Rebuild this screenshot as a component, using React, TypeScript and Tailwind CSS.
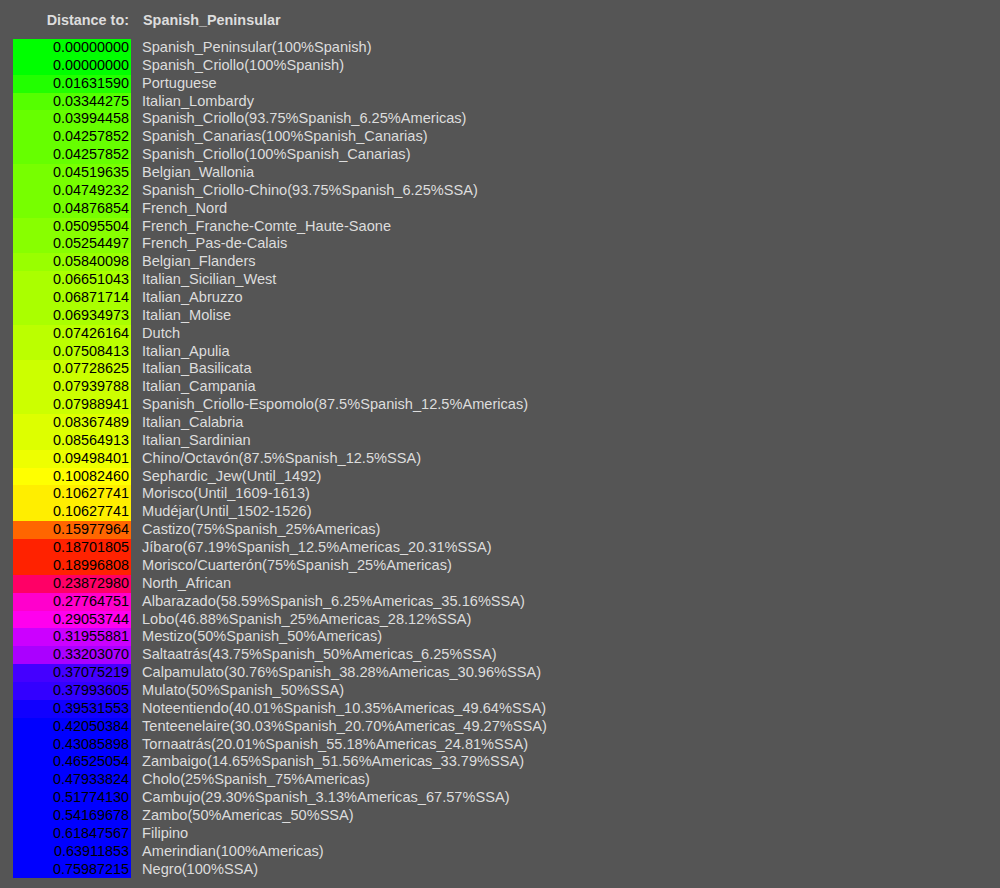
const rows: [number, string][] = [
  [0.0, "Spanish_Peninsular(100%Spanish)"],
  [0.0, "Spanish_Criollo(100%Spanish)"],
  [0.0163159, "Portuguese"],
  [0.03344275, "Italian_Lombardy"],
  [0.03994458, "Spanish_Criollo(93.75%Spanish_6.25%Americas)"],
  [0.04257852, "Spanish_Canarias(100%Spanish_Canarias)"],
  [0.04257852, "Spanish_Criollo(100%Spanish_Canarias)"],
  [0.04519635, "Belgian_Wallonia"],
  [0.04749232, "Spanish_Criollo-Chino(93.75%Spanish_6.25%SSA)"],
  [0.04876854, "French_Nord"],
  [0.05095504, "French_Franche-Comte_Haute-Saone"],
  [0.05254497, "French_Pas-de-Calais"],
  [0.05840098, "Belgian_Flanders"],
  [0.06651043, "Italian_Sicilian_West"],
  [0.06871714, "Italian_Abruzzo"],
  [0.06934973, "Italian_Molise"],
  [0.07426164, "Dutch"],
  [0.07508413, "Italian_Apulia"],
  [0.07728625, "Italian_Basilicata"],
  [0.07939788, "Italian_Campania"],
  [0.07988941, "Spanish_Criollo-Espomolo(87.5%Spanish_12.5%Americas)"],
  [0.08367489, "Italian_Calabria"],
  [0.08564913, "Italian_Sardinian"],
  [0.09498401, "Chino/Octavón(87.5%Spanish_12.5%SSA)"],
  [0.1008246, "Sephardic_Jew(Until_1492)"],
  [0.10627741, "Morisco(Until_1609-1613)"],
  [0.10627741, "Mudéjar(Until_1502-1526)"],
  [0.15977964, "Castizo(75%Spanish_25%Americas)"],
  [0.18701805, "Jíbaro(67.19%Spanish_12.5%Americas_20.31%SSA)"],
  [0.18996808, "Morisco/Cuarterón(75%Spanish_25%Americas)"],
  [0.2387298, "North_African"],
  [0.27764751, "Albarazado(58.59%Spanish_6.25%Americas_35.16%SSA)"],
  [0.29053744, "Lobo(46.88%Spanish_25%Americas_28.12%SSA)"],
  [0.31955881, "Mestizo(50%Spanish_50%Americas)"],
  [0.3320307, "Saltaatrás(43.75%Spanish_50%Americas_6.25%SSA)"],
  [0.37075219, "Calpamulato(30.76%Spanish_38.28%Americas_30.96%SSA)"],
  [0.37993605, "Mulato(50%Spanish_50%SSA)"],
  [0.39531553, "Noteentiendo(40.01%Spanish_10.35%Americas_49.64%SSA)"],
  [0.42050384, "Tenteenelaire(30.03%Spanish_20.70%Americas_49.27%SSA)"],
  [0.43085898, "Tornaatrás(20.01%Spanish_55.18%Americas_24.81%SSA)"],
  [0.46525054, "Zambaigo(14.65%Spanish_51.56%Americas_33.79%SSA)"],
  [0.47933824, "Cholo(25%Spanish_75%Americas)"],
  [0.5177413, "Cambujo(29.30%Spanish_3.13%Americas_67.57%SSA)"],
  [0.54169678, "Zambo(50%Americas_50%SSA)"],
  [0.61847567, "Filipino"],
  [0.63911853, "Amerindian(100%Americas)"],
  [0.75987215, "Negro(100%SSA)"],
];

// green -> yellow -> red -> magenta -> blue, stepped like a 3-digit hex
function cellColor(v: number) {
  const h = Math.max(120 - 600 * v, -120);
  let r = 0, g = 0, b = 0;
  if (h >= 60) { r = ((120 - h) / 60) * 255; g = 255; }
  else if (h >= 0) { r = 255; g = (h / 60) * 255; }
  else if (h >= -60) { r = 255; b = (-h / 60) * 255; }
  else { r = ((120 + h) / 60) * 255; b = 255; }
  const q = (x: number) => Math.round(x / 17) * 17;
  return `rgb(${q(r)}, ${q(g)}, ${q(b)})`;
}

export default function App() {
  return (
    <div
      className="min-h-screen bg-[#555555] pl-[13px] pt-[11px] text-[14.4px] text-[#dddddd]"
      style={{ fontFamily: '"Liberation Sans", Arial, sans-serif' }}
    >
      {/* Header */}
      <div className="flex h-[18px] leading-[18px] font-bold">
        <div className="w-[118px] pr-[2px] text-right">Distance to:</div>
        <div className="pl-[12px]">Spanish_Peninsular</div>
      </div>

      <div className="mt-[10px] flex flex-col">
        {rows.map(([v, name], i) => (
          <div key={i} className="flex h-[17.87px] leading-[17.87px]">
            <div
              className="w-[118px] shrink-0 pr-[2px] text-right text-black"
              style={{ backgroundColor: cellColor(v) }}
            >
              {v.toFixed(8)}
            </div>
            <div className="whitespace-nowrap pl-[11px] text-[14.6px]">{name}</div>
          </div>
        ))}
      </div>
    </div>
  );
}
